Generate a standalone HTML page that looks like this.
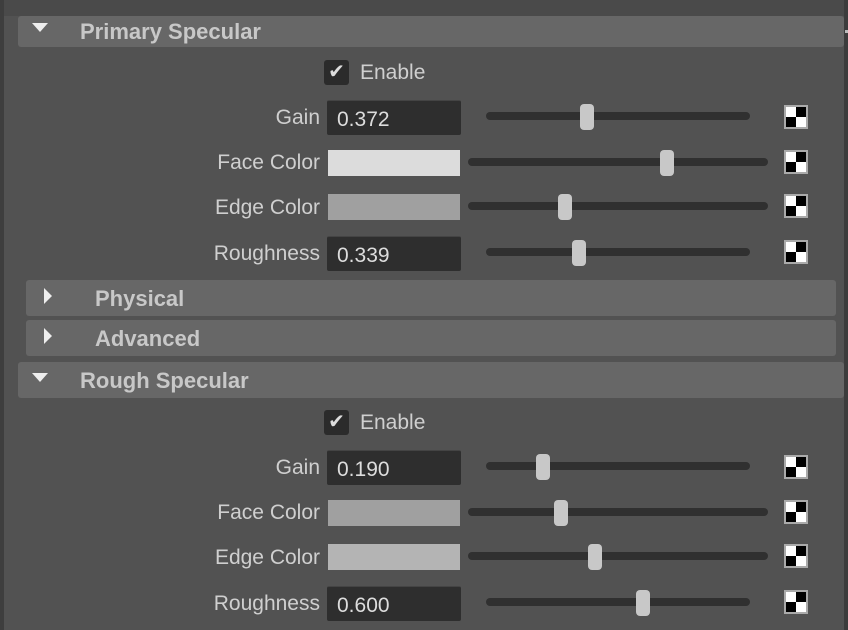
<!DOCTYPE html>
<html><head><style>
body{margin:0;width:848px;height:630px;background:#525252;position:relative;overflow:hidden;font-family:"Liberation Sans",sans-serif;color:#cfcfcf}
.a{position:absolute}
.hdr{position:absolute;background:#676767;border-radius:3px;font-weight:bold;font-size:22px;color:#c8c8c8}
.lbl{position:absolute;right:528px;font-size:21px;text-align:right;white-space:nowrap}
.fld{position:absolute;left:327px;width:134px;height:35px;background:#2e2e2e;border-radius:2px;font-size:21px;line-height:37px;text-indent:10px;color:#ddd;box-sizing:border-box;border-top:1px solid #444}
.sw{position:absolute;left:328px;width:132px;height:26px}
.tr{position:absolute;height:8px;background:#303030;border-radius:4px}
.hd{position:absolute;width:14px;height:26px;background:#c8c8c8;border-radius:4px}
.ck{position:absolute;left:784px;width:24px;height:24px;box-sizing:border-box;border:2px solid #aaa;background:conic-gradient(#000 0 25%,#fff 0 50%,#000 0 75%,#fff 0)}
.cb{position:absolute;left:324px;width:25px;height:25px;background:#2b2b2b;border-radius:3px;color:#ddd;font-size:20px;line-height:25px;text-align:center}
.dn{position:absolute;width:0;height:0;border-left:8px solid transparent;border-right:8px solid transparent;border-top:9px solid #eee}
.rt{position:absolute;width:0;height:0;border-top:8px solid transparent;border-bottom:8px solid transparent;border-left:8px solid #eee}
</style></head><body>
<div class="a" style="left:0;top:0;width:848px;height:16px;background:#4a4a4a"></div>
<div class="a" style="left:0;top:0;width:4px;height:630px;background:#3e3e3e"></div>
<div class="a" style="left:844px;top:0;width:4px;height:630px;background:#3c3c3c"></div>
<div class="a" style="left:845px;top:30px;width:3px;height:3px;background:#bbb"></div>

<div class="hdr" style="left:18px;top:16px;width:826px;height:31px"><span class="dn" style="left:14px;top:7px"></span><span class="a" style="left:62px;top:3px">Primary Specular</span></div>

<div class="cb" style="top:60px">✔</div><div class="a" style="left:360px;top:61px;font-size:21px">Enable</div>
<div class="lbl" style="top:106px">Gain</div><div class="fld" style="top:100px">0.372</div>
<div class="tr" style="left:486px;width:264px;top:112px"></div><div class="hd" style="left:580px;top:104px"></div><div class="ck" style="top:105px"></div>
<div class="lbl" style="top:151px">Face Color</div><div class="sw" style="top:150px;background:#dcdcdc"></div>
<div class="tr" style="left:468px;width:300px;top:158px"></div><div class="hd" style="left:660px;top:150px"></div><div class="ck" style="top:150px"></div>
<div class="lbl" style="top:196px">Edge Color</div><div class="sw" style="top:194px;background:#a0a0a0"></div>
<div class="tr" style="left:468px;width:300px;top:202px"></div><div class="hd" style="left:558px;top:194px"></div><div class="ck" style="top:194px"></div>
<div class="lbl" style="top:242px">Roughness</div><div class="fld" style="top:236px">0.339</div>
<div class="tr" style="left:486px;width:264px;top:248px"></div><div class="hd" style="left:572px;top:240px"></div><div class="ck" style="top:240px"></div>

<div class="hdr" style="left:26px;top:280px;width:810px;height:36px"><span class="rt" style="left:18px;top:8px"></span><span class="a" style="left:69px;top:6px">Physical</span></div>
<div class="hdr" style="left:26px;top:320px;width:810px;height:36px"><span class="rt" style="left:18px;top:8px"></span><span class="a" style="left:69px;top:6px">Advanced</span></div>
<div class="hdr" style="left:18px;top:362px;width:826px;height:36px"><span class="dn" style="left:14px;top:11px"></span><span class="a" style="left:62px;top:6px">Rough Specular</span></div>

<div class="cb" style="top:410px">✔</div><div class="a" style="left:360px;top:411px;font-size:21px">Enable</div>
<div class="lbl" style="top:456px">Gain</div><div class="fld" style="top:450px">0.190</div>
<div class="tr" style="left:486px;width:264px;top:462px"></div><div class="hd" style="left:536px;top:454px"></div><div class="ck" style="top:455px"></div>
<div class="lbl" style="top:501px">Face Color</div><div class="sw" style="top:500px;background:#a0a0a0"></div>
<div class="tr" style="left:468px;width:300px;top:508px"></div><div class="hd" style="left:554px;top:500px"></div><div class="ck" style="top:500px"></div>
<div class="lbl" style="top:546px">Edge Color</div><div class="sw" style="top:544px;background:#b4b4b4"></div>
<div class="tr" style="left:468px;width:300px;top:552px"></div><div class="hd" style="left:588px;top:544px"></div><div class="ck" style="top:544px"></div>
<div class="lbl" style="top:592px">Roughness</div><div class="fld" style="top:586px">0.600</div>
<div class="tr" style="left:486px;width:264px;top:598px"></div><div class="hd" style="left:636px;top:590px"></div><div class="ck" style="top:590px"></div>
</body></html>
